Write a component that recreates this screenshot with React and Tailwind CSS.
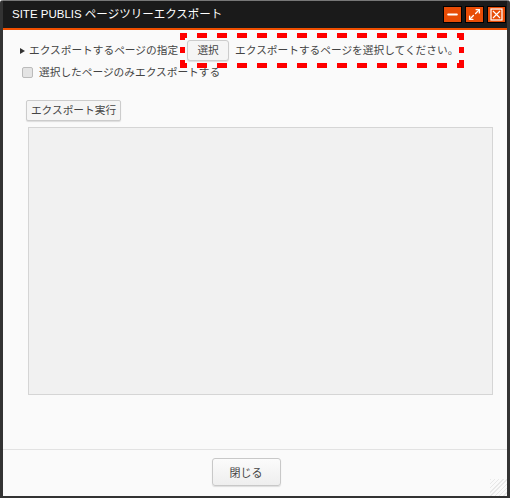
import { Minus, Maximize2 } from 'lucide-react';

const font = { fontFamily: '"Noto Sans CJK JP", "Liberation Sans", sans-serif' };

function TitleButton({ children }) {
  return (
    <button className="flex h-[15px] w-[17px] items-center justify-center bg-[#e84c06] text-white shadow-[0_0_0_1px_#000]">
      {children}
    </button>
  );
}

export default function App() {
  return (
    <div className="flex h-[498px] w-[510px] flex-col overflow-hidden rounded-t-[3px] border-x-[3px] border-b-[2px] border-t border-x-[#333333] border-b-[#333333] border-t-[#777777] bg-[#fafafa]">
      <div className="flex h-[27px] shrink-0 items-center justify-between bg-[#1a1a1a] pl-[9px] pr-[2px]">
        <span className="font-['Liberation_Sans','Noto_Sans_CJK_JP',sans-serif] text-[11.5px] text-white">SITE PUBLIS ページツリーエクスポート</span>
        <div className="flex gap-[5px]">
          <TitleButton><Minus size={15} strokeWidth={3} /></TitleButton>
          <TitleButton><Maximize2 size={13} strokeWidth={2.5} /></TitleButton>
          <TitleButton>
            <svg width="13" height="13" viewBox="0 0 13 13" fill="none" stroke="white" strokeWidth="1.2">
              <rect x="1" y="1" width="11" height="11" />
              <path d="M3 3l7 7M10 3l-7 7" />
            </svg>
          </TitleButton>
        </div>
      </div>
      <div className="h-[2px] shrink-0 bg-[#f04f00]" />

      <div className="relative flex min-h-0 flex-1 flex-col text-[10.7px] text-[#444444]" style={font}>
        <svg className="absolute left-[177px] top-[3px]" width="284" height="35" fill="#ff0000">
          <path d="M0 2.5H284M0 32.5H284" stroke="#ff0000" strokeWidth="5" strokeDasharray="10 10" strokeDashoffset="3" />
          <path d="M0 0h5v7H0zM0 14h5v6H0zM0 27h5v8H0zM279 0h5v7h-5zM279 14h5v6h-5zM279 27h5v8h-5z" />
        </svg>

        <div className="ml-[17px] mt-[10px] flex h-[21px] items-center">
          <span className="mr-[4px] h-0 w-0 border-y-[3px] border-l-[5px] border-y-transparent border-l-[#333333]" />
          <span>エクスポートするページの指定</span>
          <button className="ml-[9px] h-[21px] w-[42px] rounded-[3px] border border-[#cccccc] bg-[#f5f5f5] shadow-[0_1px_1px_#dddddd]">選択</button>
          <span className="ml-[6px]">エクスポートするページを選択してください。</span>
        </div>

        <div className="ml-[19px] mt-[5px] flex h-[12px] items-center gap-[6px]">
          <span className="h-[11px] w-[11px] rounded-[2px] border border-[#bbbbbb] bg-[#e4e4e4]" />
          <span>選択したページのみエクスポートする</span>
        </div>

        <button className="ml-[23px] mt-[22px] h-[21px] w-[95px] shrink-0 rounded-[2px] border border-[#cccccc] bg-[#f5f5f5] shadow-[0_1px_1px_#dddddd]">エクスポート実行</button>

        <div className="ml-[25px] mt-[6px] h-[268px] w-[465px] shrink-0 border border-[#d5d5d5] bg-[#f1f1f1]" />

        <div className="mt-[54px] flex flex-1 items-start justify-center border-t border-[#e2e2e2] pt-[8px]">
          <button className="mr-[18px] h-[28px] w-[69px] rounded-[3px] border border-[#c8c8c8] bg-gradient-to-b from-[#fbfbfb] to-[#eeeeee] text-[11px] shadow-[0_1px_1px_#dddddd]">閉じる</button>
        </div>

        <div className="absolute bottom-0 right-0 h-[17px] w-[17px] bg-[repeating-linear-gradient(135deg,#e8e8e8_0,#e8e8e8_1px,#fafafa_1px,#fafafa_3px)]" />
      </div>
    </div>
  );
}
